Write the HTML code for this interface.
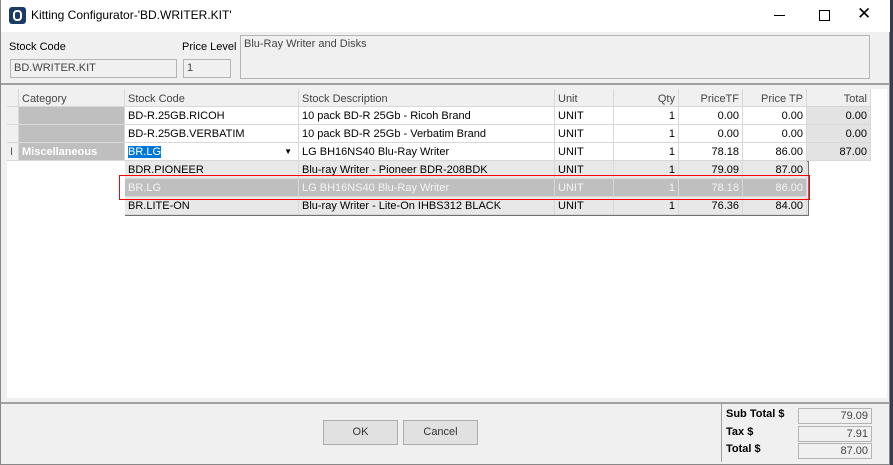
<!DOCTYPE html><html><head><style>
*{box-sizing:border-box;margin:0;padding:0}
body{width:893px;height:465px;position:relative;overflow:hidden;background:#3a3a50;font-family:"Liberation Sans",Tahoma,sans-serif;font-size:11px;color:#000}
.a{position:absolute}
.win{left:0;top:0;width:890px;height:465px;background:#f0f0f0;border:1px solid #888;border-top:none}
.t{white-space:nowrap;line-height:18px;padding:0 3px;overflow:hidden}
.r{text-align:right}
.in{background:#f0f0f0;border:1px solid #b4b4b4;color:#444;padding:0 3px;line-height:17px}
</style></head><body>
<div class="a win">
<div class="a" style="left:0;top:0;width:889px;height:32px;background:#fff"></div>
<div class="a" style="left:8px;top:7px;width:17px;height:17px;background:#1c3a66;border-radius:3px"><div class="a" style="left:4px;top:3px;width:9px;height:11px;border:2px solid #fff;border-radius:4px"></div></div>
<div class="a" style="left:30px;top:8px;font-size:12px">Kitting Configurator-'BD.WRITER.KIT'</div>
<div class="a" style="left:773px;top:15px;width:11px;height:1px;background:#000"></div>
<div class="a" style="left:818px;top:10px;width:11px;height:11px;border:1px solid #000"></div>
<div class="a" style="left:856px;top:4px;font-size:17px;font-weight:300">✕</div>
<div class="a" style="left:8px;top:41px">Stock Code</div>
<div class="a" style="left:181px;top:41px">Price Level</div>
<div class="a in" style="left:9px;top:59px;width:167px;height:19px">BD.WRITER.KIT</div>
<div class="a in" style="left:182px;top:59px;width:48px;height:19px">1</div>
<div class="a in" style="left:239px;top:35px;width:630px;height:44px;line-height:16px">Blu-Ray Writer and Disks</div>
<div class="a" style="left:0;top:83px;width:889px;height:2px;background:#a0a0a0"></div>
<div class="a" style="left:6px;top:89px;width:880px;height:309px;background:#fff"></div>
<div class="a" style="left:6px;top:89px;width:864px;height:18px;background:#f0f0f0"></div>
<div id="g"></div>
<div class="a" style="left:0;top:402px;width:889px;height:2px;background:#a0a0a0"></div>
<div class="a" style="left:322px;top:420px;width:75px;height:25px;border:1px solid #adadad;background:#e1e1e1;text-align:center;line-height:23px;color:#333">OK</div>
<div class="a" style="left:402px;top:420px;width:75px;height:25px;border:1px solid #adadad;background:#e1e1e1;text-align:center;line-height:23px;color:#333">Cancel</div>
<div class="a" style="left:720px;top:404px;width:1px;height:58px;background:#a0a0a0"></div>
<div class="a" style="left:725px;top:408px;font-weight:bold">Sub Total $</div>
<div class="a" style="left:725px;top:426px;font-weight:bold">Tax $</div>
<div class="a" style="left:725px;top:443px;font-weight:bold">Total $</div>
<div class="a in r" style="left:797px;top:408px;width:74px;height:16px;line-height:14px">79.09</div>
<div class="a in r" style="left:797px;top:426px;width:74px;height:16px;line-height:14px">7.91</div>
<div class="a in r" style="left:797px;top:443px;width:74px;height:16px;line-height:14px">87.00</div>
</div>
<script>
var X=[6,18,124,298,554,613,678,742,806,870];
var h='';
function cell(i,y,txt,st,al){var x=X[i],w=X[i+1]-x;h+='<div class="a t'+(al?' r':'')+'" style="left:'+x+'px;top:'+y+'px;width:'+w+'px;height:18px;border-right:1px solid #d8d8d8;border-bottom:1px solid #d8d8d8;'+(st||'')+'">'+txt+'</div>';}
var hd=['','Category','Stock Code','Stock Description','Unit','Qty','PriceTF','Price TP','Total'];
hd.forEach(function(t,i){cell(i,89,t,'color:#444;background:#f0f0f0;line-height:20px',i>4)});
var rows=[['','BD-R.25GB.RICOH','10 pack BD-R 25Gb - Ricoh Brand','UNIT','1','0.00','0.00','0.00'],
['','BD-R.25GB.VERBATIM','10 pack BD-R 25Gb - Verbatim Brand','UNIT','1','0.00','0.00','0.00'],
['Miscellaneous','<span style="background:#0078d7;color:#fff">BR.LG</span><span style="position:absolute;right:6px;font-size:8px">▼</span>','LG BH16NS40 Blu-Ray Writer','UNIT','1','78.18','86.00','87.00']];
rows.forEach(function(r,k){var y=107+k*18;cell(0,y,k==2?'I':'','background:#f0f0f0;color:#555');
cell(1,y,r[0],'background:#bfbfbf;color:#fff;font-weight:bold');
for(var j=1;j<8;j++)cell(j+1,y,r[j],j==7?'background:#e3e3e3':'',j>3);});
h+='<div class="a" style="left:124px;top:161px;width:684px;height:55px;border:1px solid #707070;background:#e8e8e8"></div>';
var dd=[['BDR.PIONEER','Blu-ray Writer - Pioneer BDR-208BDK','UNIT','1','79.09','87.00'],
['BR.LG','LG BH16NS40 Blu-Ray Writer','UNIT','1','78.18','86.00'],
['BR.LITE-ON','Blu-ray Writer - Lite-On IHBS312 BLACK','UNIT','1','76.36','84.00']];
dd.forEach(function(r,k){var y=161+k*18;for(var j=0;j<6;j++)cell(j+2,y,r[j],k==1?'background:#bfbfbf;color:#f4f4f4':'background:#e8e8e8',j>2);});
h+='<div class="a" style="left:118px;top:175px;width:691px;height:25px;border:1px solid #ff0000;z-index:5"></div>';
document.getElementById('g').innerHTML=h;
</script>
</body></html>
